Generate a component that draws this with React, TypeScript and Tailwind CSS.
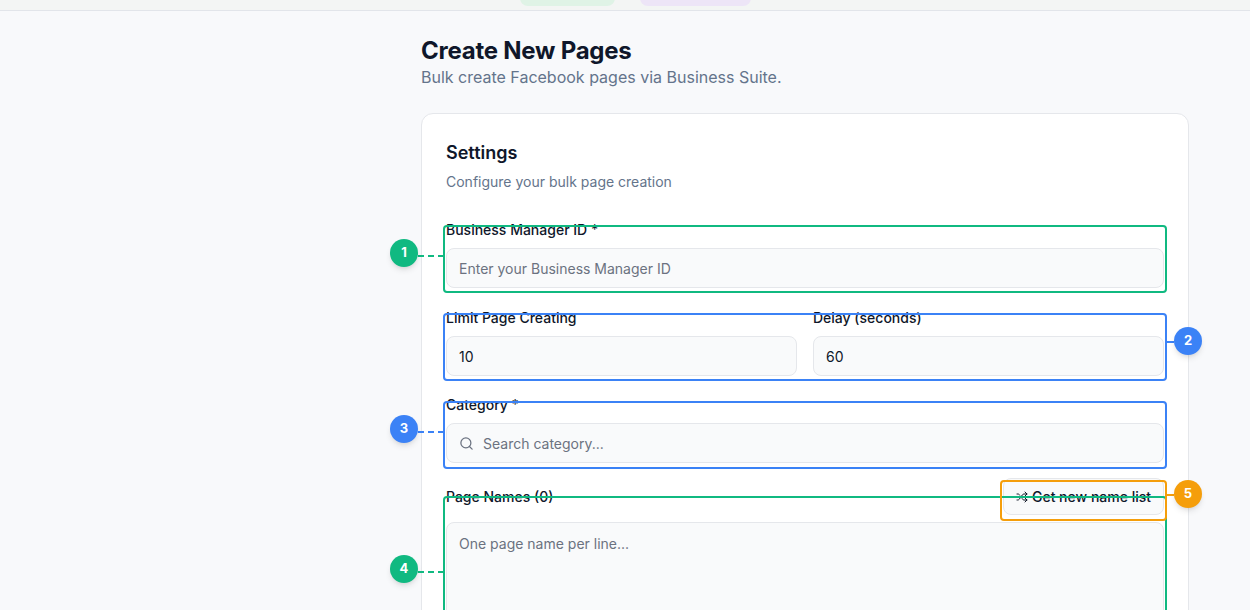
import React from "react";

const Badge = ({ n, color, x, y }: { n: number; color: string; x: number; y: number }) => (
  <div
    className="absolute w-[28px] h-[28px] rounded-full text-white text-[13px] font-bold flex items-center justify-center shadow-md"
    style={{ left: x - 14, top: y - 14, background: color }}
  >
    {n}
  </div>
);
const Box = ({ color, x, y, w, h }: { color: string; x: number; y: number; w: number; h: number }) => (
  <div className="absolute rounded-[4px] border-2 pointer-events-none" style={{ left: x, top: y, width: w, height: h, borderColor: color }} />
);
const Dash = ({ color, x, y, w }: { color: string; x: number; y: number; w: number }) => (
  <div className="absolute border-t-2 border-dashed" style={{ left: x, top: y - 1, width: w, borderColor: color }} />
);

export default function App() {
  const G = "#10b981", B = "#3b82f6", O = "#f59e0b";
  return (
    <div className="relative w-[1250px] h-[610px] overflow-hidden bg-[#f8f9fb] text-[#0f172a]" style={{ fontFamily: "Inter, 'Noto Sans', sans-serif" }}>
      <div className="h-[11px] bg-[#f3f5f4] border-b border-[#e2e5ea] relative">
        <div className="absolute left-[520px] top-[-10px] w-[95px] h-[16px] rounded-full bg-[#dff3e6]" />
        <div className="absolute left-[640px] top-[-10px] w-[111px] h-[16px] rounded-full bg-[#ede5f7]" />
      </div>
      <div className="ml-[421px] w-[768px] pt-[24px]">
        <h1 className="text-[24px] font-bold leading-[32px] tracking-[-0.01em]">Create New Pages</h1>
        <p className="text-[16px] text-[#64748b] leading-[24px] mt-[-2px]">Bulk create Facebook pages via Business Suite.</p>
        <div className="mt-[24px] bg-white border border-[#e5e7eb] rounded-[12px] px-[24px] pt-[25px] pb-[24px] h-[600px]">
          <h2 className="text-[18px] font-semibold leading-[28px]">Settings</h2>
          <p className="text-[14px] text-[#64748b] leading-[20px] mt-[5px]">Configure your bulk page creation</p>
          <div className="mt-[28px]">
            <label className="block text-[14px] font-medium leading-[20px]">Business Manager ID *</label>
            <div className="mt-[8px] h-[40px] rounded-[8px] border border-[#e5e7eb] bg-[#f9fafb] px-[12px] flex items-center text-[14px] text-[#6b7280]">Enter your Business Manager ID</div>
          </div>
          <div className="mt-[20px] grid grid-cols-2 gap-[16px]">
            <div>
              <label className="block text-[14px] font-medium leading-[20px]">Limit Page Creating</label>
              <div className="mt-[8px] h-[40px] rounded-[8px] border border-[#e5e7eb] bg-[#f9fafb] px-[12px] flex items-center text-[14px]">10</div>
            </div>
            <div>
              <label className="block text-[14px] font-medium leading-[20px]">Delay (seconds)</label>
              <div className="mt-[8px] h-[40px] rounded-[8px] border border-[#e5e7eb] bg-[#f9fafb] px-[12px] flex items-center text-[14px]">60</div>
            </div>
          </div>
          <div className="mt-[19px]">
            <label className="block text-[14px] font-medium leading-[20px]">Category *</label>
            <div className="mt-[8px] h-[40px] rounded-[8px] border border-[#e5e7eb] bg-[#f9fafb] px-[12px] flex items-center gap-[9px] text-[14px] text-[#6b7280]">
              <svg width="15" height="15" viewBox="0 0 24 24" fill="none" stroke="#6b7280" strokeWidth="2" strokeLinecap="round"><circle cx="11" cy="11" r="8" /><path d="m21 21-4.3-4.3" /></svg>
              Search category...
            </div>
          </div>
          <div className="mt-[15px] flex items-center justify-between">
            <label className="text-[14px] font-medium leading-[20px]">Page Names (0)</label>
            <button className="h-[37px] px-[12px] rounded-[8px] border border-[#e5e7eb] bg-[#f9fafb] flex items-center gap-[4px] text-[14px] font-medium">
              <svg width="12" height="12" viewBox="0 0 24 24" fill="none" stroke="#111827" strokeWidth="2" strokeLinecap="round" strokeLinejoin="round"><path d="M2 18h1.4c1.3 0 2.5-.6 3.3-1.7l6.1-8.6c.7-1.1 2-1.7 3.3-1.7H22" /><path d="m18 2 4 4-4 4" /><path d="M2 6h1.9c1.5 0 2.9.9 3.6 2.2" /><path d="M22 18h-5.9c-1.3 0-2.6-.7-3.3-1.8l-.5-.8" /><path d="m18 14 4 4-4 4" /></svg>
              Get new name list
            </button>
          </div>
          <div className="mt-[7px] h-[200px] rounded-[8px] border border-[#e5e7eb] bg-[#f9fafb] px-[12px] py-[10px] text-[14px] text-[#6b7280]">One page name per line...</div>
        </div>
      </div>

      <Box color={G} x={443} y={225} w={724} h={68} />
      <Dash color={G} x={418} y={256} w={26} />
      <Badge n={1} color={G} x={404} y={253} />

      <Box color={B} x={443} y={313} w={724} h={68} />
      <Dash color={B} x={1166} y={342} w={8} />
      <Badge n={2} color={B} x={1188} y={341} />

      <Box color={B} x={443} y={401} w={724} h={68} />
      <Dash color={B} x={418} y={432} w={26} />
      <Badge n={3} color={B} x={404} y={429} />

      <Box color={G} x={443} y={496} w={724} h={200} />
      <Dash color={G} x={418} y={572} w={26} />
      <Badge n={4} color={G} x={404} y={569} />

      <Box color={O} x={1000} y={480} w={167} h={41} />
      <Dash color={O} x={1166} y={495} w={8} />
      <Badge n={5} color={O} x={1188} y={494} />
    </div>
  );
}
